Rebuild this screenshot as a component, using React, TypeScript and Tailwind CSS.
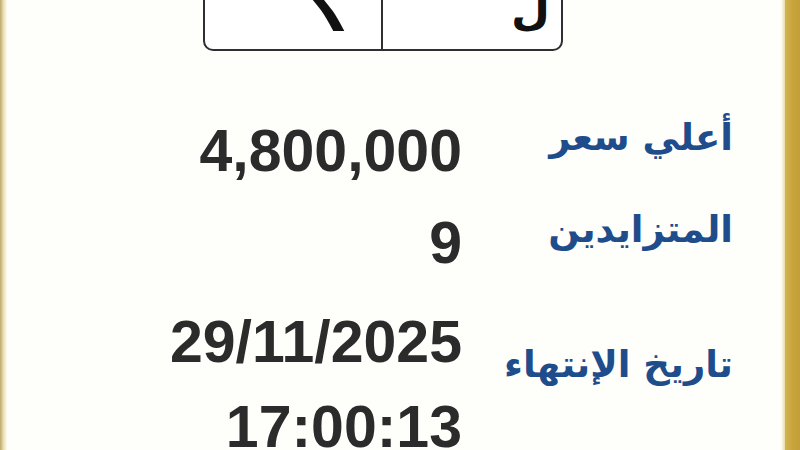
import React from "react";

interface Row {
  label: string;
  values: string[];
  height: string;
  lift: string;
  leading: string;
}

const rows: Row[] = [
  { label: "أعلي سعر", values: ["4,800,000"], height: "h-[76px]", lift: "mb-[28px]", leading: "leading-[83px]" },
  { label: "المتزايدين", values: ["9"], height: "h-[114px]", lift: "mb-[28px]", leading: "leading-[83px]" },
  { label: "تاريخ الإنتهاء", values: ["29/11/2025", "17:00:13"], height: "h-[144px]", lift: "mb-[42px]", leading: "leading-[85px]" },
];

const App: React.FC = () => {
  return (
    <div className="w-[800px] h-[450px] overflow-hidden flex bg-[#fefefb]">
      {/* left frame edge */}
      <div className="w-[7px] shrink-0 bg-gradient-to-r from-[#bba86c] via-[#eadfae] to-[#fdfbf0]" />

      <div className="flex-1 flex flex-col">
        {/* plate, top half is cut off by the viewport */}
        <div className="ml-[196px] -mt-[60px] w-[360px] h-[111px] shrink-0 border-2 border-[#2f2f2f] rounded-[10px] bg-white flex overflow-hidden font-['DejaVu_Sans',sans-serif] font-bold text-[#111] leading-none">
          <div className="w-[178px] shrink-0 border-r-2 border-[#2f2f2f] flex items-end pl-[100px] pb-[8px] text-[64px]">
            <span className="inline-block skew-x-[28deg]">١</span>
          </div>
          <div className="flex-1 flex items-end pl-[128px] pb-[18px] text-[45px]">
            <span>ل</span>
          </div>
        </div>

        {/* details table */}
        <div className="mt-[59px] flex flex-col">
          {rows.map(row => (
            <div key={row.label} className={`grid grid-cols-[455px_271px] items-center ${row.height}`}>
              <div className={`text-right font-['Liberation_Sans',Arial,sans-serif] font-bold text-[59px] text-[#2b2b2b] ${row.leading}`}>
                {row.values.map(v => (
                  <div key={v}>{v}</div>
                ))}
              </div>
              <div dir="rtl" className={`text-right font-['DejaVu_Sans',sans-serif] font-bold text-[37px] leading-none text-[#1f4d8c] ${row.lift}`}>
                {row.label}
              </div>
            </div>
          ))}
        </div>
      </div>

      {/* right frame edge */}
      <div className="w-[4px] shrink-0 bg-gradient-to-r from-[#fefefb] to-[#e9dca6]" />
      <div className="w-[15px] shrink-0 bg-gradient-to-r from-[#d3b352] via-[#c8a43c] to-[#c29f3a]" />
    </div>
  );
};

export default App;
